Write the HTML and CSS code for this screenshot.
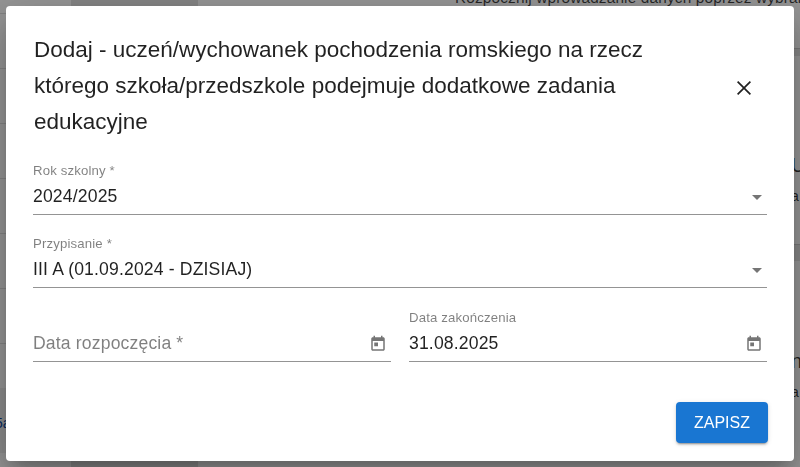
FILE: index.html
```html
<!DOCTYPE html>
<html lang="pl">
<head>
<meta charset="utf-8">
<title>Dodaj</title>
<link rel="stylesheet" href="styles.css">
</head>
<body>
<div class="page">
  <div class="col-left">
    <div class="cell cell-first"></div>
    <div class="cell"></div><div class="cell"></div><div class="cell"></div>
    <div class="cell"></div><div class="cell"></div><div class="cell"></div>
    <div class="cell-box"><span class="link">5a</span></div>
  </div>
  <div class="col-mid"></div>
  <div class="col-main">
    <p class="intro">Rozpocznij wprowadzanie danych poprzez wybranie</p>
    <div class="band band-a"></div>
    <div class="edge-row edge-u"><span class="edge-big">U</span><span class="edge-small">a</span></div>
    <div class="band band-b"></div>
    <div class="edge-row edge-n"><span class="edge-big">n</span><span class="edge-small">a</span></div>
  </div>
</div>
<div class="backdrop"></div>
<div class="dialog" role="dialog">
  <header class="dialog-head">
    <h2 class="dialog-title">Dodaj - uczeń/wychowanek pochodzenia romskiego na rzecz którego szkoła/przedszkole podejmuje dodatkowe zadania edukacyjne</h2>
    <svg class="close-icon" viewBox="0 0 24 24" aria-label="Zamknij"><path d="M19 6.2 17.8 5 12 10.8 6.2 5 5 6.2 10.8 12 5 17.8 6.2 19 12 13.2 17.8 19 19 17.8 13.2 12z"/></svg>
  </header>
  <div class="form">
    <div class="field">
      <span class="label">Rok szkolny *</span>
      <div class="control">
        <span class="value">2024/2025</span>
        <svg class="arrow-icon" viewBox="0 0 24 24"><path d="M7 10l5 5 5-5z"/></svg>
      </div>
    </div>
    <div class="field">
      <span class="label">Przypisanie *</span>
      <div class="control">
        <span class="value">III A (01.09.2024 - DZISIAJ)</span>
        <svg class="arrow-icon" viewBox="0 0 24 24"><path d="M7 10l5 5 5-5z"/></svg>
      </div>
    </div>
    <div class="field-row">
      <div class="field">
        <span class="label">&nbsp;</span>
        <div class="control">
          <span class="value placeholder">Data rozpoczęcia *</span>
          <svg class="cal-icon" viewBox="0 0 24 24"><path d="M19 3h-1V1h-2v2H8V1H6v2H5c-1.11 0-2 .9-2 2v14c0 1.1.89 2 2 2h14c1.1 0 2-.9 2-2V5c0-1.1-.9-2-2-2zm0 16H5V8h14v11zM7 10h5v5H7z"/></svg>
        </div>
      </div>
      <div class="field">
        <span class="label">Data zakończenia</span>
        <div class="control">
          <span class="value">31.08.2025</span>
          <svg class="cal-icon" viewBox="0 0 24 24"><path d="M19 3h-1V1h-2v2H8V1H6v2H5c-1.11 0-2 .9-2 2v14c0 1.1.89 2 2 2h14c1.1 0 2-.9 2-2V5c0-1.1-.9-2-2-2zm0 16H5V8h14v11zM7 10h5v5H7z"/></svg>
        </div>
      </div>
    </div>
  </div>
  <div class="actions">
    <button class="save" type="button">ZAPISZ</button>
  </div>
</div>
</body>
</html>
```
FILE: styles.css
```css
* { box-sizing: border-box; }
html, body { margin: 0; height: 100%; overflow: hidden; }
body {
  font-family: "Liberation Sans", Arial, sans-serif;
  background: #fff;
  color: rgba(0, 0, 0, .87);
}

/* Page behind the dialog */
.page {
  display: grid;
  grid-template-columns: 71px 127px 1fr;
  height: 467px;
  overflow: hidden;
}
.col-left { display: flex; flex-direction: column; }
.cell { height: 55px; border-bottom: 1px solid #e0e0e0; }
.cell-first { height: 14px; }
.cell-box {
  height: 65px;
  margin-top: 44px;
  background: #f0f0f0;
  padding-top: 27px;
  font-size: 14px;
}
.link { color: #0d47a1; display: block; margin-left: -5px; }
.col-mid { background: #e2e2e2; }
.col-main { overflow: hidden; }
.intro {
  margin: -11px 0 0 257px;
  font-size: 15.4px;
  letter-spacing: .15px;
  line-height: 18px;
  white-space: nowrap;
  color: rgba(0, 0, 0, .75);
}
.band { height: 8px; background: #e6e6e6; border-top: 1px solid #ccc; }
.band-a { margin-top: 41px; }
.band-b { height: 17px; margin-top: 38px; }
.edge-row {
  display: flex;
  flex-direction: column;
  margin-left: 593px;
  color: rgba(0, 0, 0, .8);
}
.edge-u { margin-top: 97px; }
.edge-n { margin-top: 88px; }
.edge-big { font-size: 20px; line-height: 24px; }
.edge-small { font-size: 14px; line-height: 20px; margin-top: 9px; }

.backdrop {
  position: fixed;
  inset: 0;
  background: rgba(0, 0, 0, .42);
}

/* Dialog */
.dialog {
  position: fixed;
  left: 6px;
  top: 6px;
  width: 788px;
  height: 455px;
  background: #fff;
  border-radius: 4px;
  padding: 26px 27px 18px;
  display: flex;
  flex-direction: column;
  box-shadow: 0 11px 15px -7px rgba(0,0,0,.2), 0 24px 38px 3px rgba(0,0,0,.14), 0 9px 46px 8px rgba(0,0,0,.12);
}
.dialog-head {
  display: flex;
  align-items: center;
  justify-content: space-between;
  padding-left: 1px;
}
.dialog-title {
  margin: 0;
  width: 640px;
  font-size: 22.5px;
  font-weight: 400;
  line-height: 36px;
}
.close-icon { width: 24px; height: 24px; fill: rgba(0,0,0,.87); margin: 4px 11px 0 0; }

.form { display: flex; flex-direction: column; gap: 21px; margin-top: 23px; }
.field { display: flex; flex-direction: column; flex: 1; min-width: 0; }
.field-row { display: flex; gap: 18px; margin-top: 1px; }
.label {
  font-size: 13.2px;
  letter-spacing: .15px;
  line-height: 16px;
  color: rgba(0,0,0,.5);
}
.control {
  display: flex;
  align-items: center;
  justify-content: space-between;
  height: 36px;
  border-bottom: 1px solid rgba(0,0,0,.42);
}
.value { font-size: 17.6px; letter-spacing: .15px; }
.placeholder { color: rgba(0,0,0,.5); }
.arrow-icon { width: 24px; height: 24px; fill: rgba(0,0,0,.54); margin-right: -2px; }
.cal-icon { width: 18px; height: 18px; fill: rgba(0,0,0,.54); margin-right: 4px; }

.actions { display: flex; justify-content: flex-end; margin-top: auto; }
.save {
  width: 92px;
  height: 41px;
  margin-right: -1px;
  border: 0;
  border-radius: 4px;
  background: #1976d2;
  color: #fff;
  font-family: inherit;
  font-size: 16px;
  box-shadow: 0 3px 1px -2px rgba(0,0,0,.2), 0 2px 2px 0 rgba(0,0,0,.14), 0 1px 5px 0 rgba(0,0,0,.12);
}
```
